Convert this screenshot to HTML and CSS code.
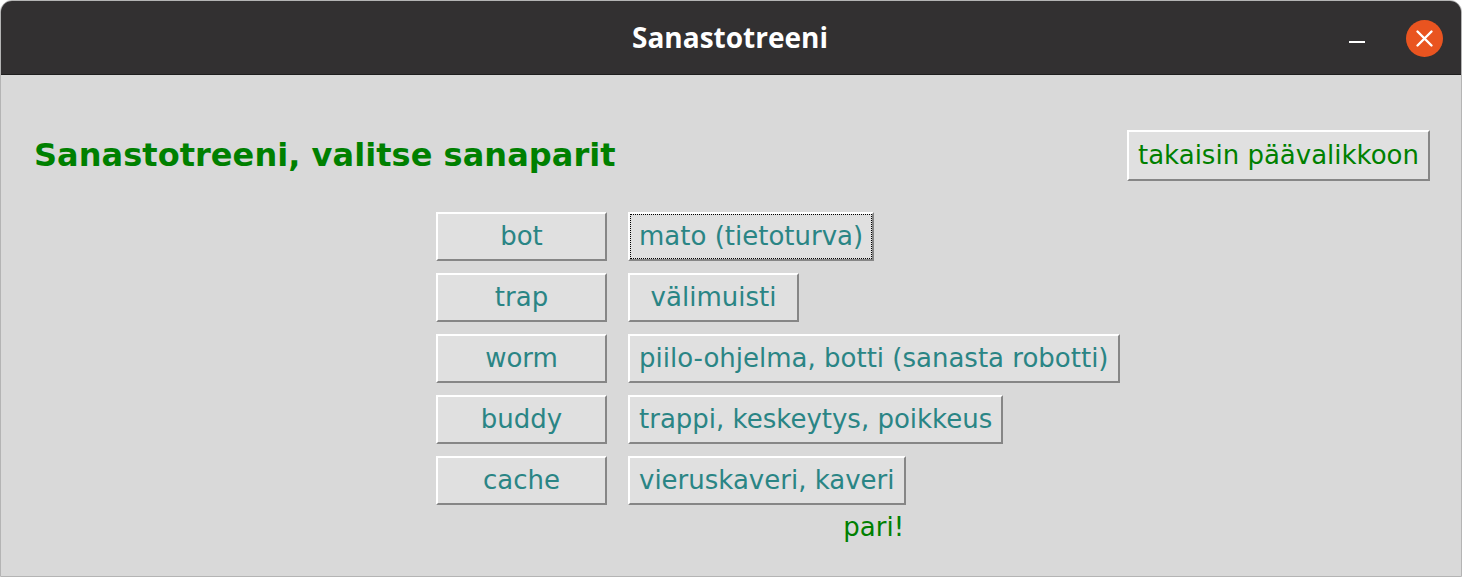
FILE: index.html
```html
<!DOCTYPE html>
<html lang="fi">
<head>
<meta charset="utf-8">
<title>Sanastotreeni</title>
<link rel="stylesheet" href="styles.css">
</head>
<body>
<div class="window">
  <div class="titlebar">
    <div class="title">Sanastotreeni</div>
    <div class="controls">
      <span class="minimize"></span>
      <span class="close">
        <svg width="37" height="37" viewBox="0 0 37 37">
          <circle cx="18.5" cy="18.5" r="18.5" fill="#e95420"/>
          <path d="M11.5 11.5 L25.5 25.5 M25.5 11.5 L11.5 25.5" stroke="#ffffff" stroke-width="2.4" stroke-linecap="round"/>
        </svg>
      </span>
    </div>
  </div>
  <div class="content">
    <div class="header">
      <h1 class="heading">Sanastotreeni, valitse sanaparit</h1>
      <button class="tkbtn back">takaisin päävalikkoon</button>
    </div>
    <div class="pairs">
      <button class="tkbtn word">bot</button>
      <button class="tkbtn meaning focused">mato (tietoturva)</button>
      <button class="tkbtn word">trap</button>
      <button class="tkbtn meaning">välimuisti</button>
      <button class="tkbtn word">worm</button>
      <button class="tkbtn meaning">piilo-ohjelma, botti (sanasta robotti)</button>
      <button class="tkbtn word">buddy</button>
      <button class="tkbtn meaning">trappi, keskeytys, poikkeus</button>
      <button class="tkbtn word">cache</button>
      <button class="tkbtn meaning">vieruskaveri, kaveri</button>
      <div class="result">pari!</div>
    </div>
  </div>
</div>
</body>
</html>
```
FILE: styles.css
```css
* { box-sizing: border-box; }
html, body {
  margin: 0;
  padding: 0;
  background: #ffffff;
}
.window {
  width: 1462px;
  height: 577px;
  border: 1px solid #b4b4b4;
  border-radius: 12px 12px 0 0;
  overflow: hidden;
  display: flex;
  flex-direction: column;
  background: #d9d9d9;
}
.titlebar {
  height: 74px;
  flex: none;
  background: #323031;
  border-bottom: 1px solid #1e1e1e;
  position: relative;
  display: flex;
  align-items: center;
  justify-content: center;
}
.title {
  font-family: "Open Sans", "DejaVu Sans", sans-serif;
  font-weight: 700;
  font-size: 28px;
  color: #ffffff;
  margin-top: -2px;
  margin-left: -2px;
}
.controls {
  position: absolute;
  right: 18px;
  top: 19px;
  display: flex;
  align-items: center;
  gap: 41px;
}
.minimize {
  display: block;
  width: 16px;
  height: 2px;
  background: #ffffff;
  margin-top: 6px;
}
.close {
  display: block;
  width: 37px;
  height: 37px;
}
.close svg { display: block; }
.content {
  flex: 1;
  background: #d9d9d9;
  padding-top: 55px;
  font-family: "DejaVu Sans", sans-serif;
}
.header {
  display: flex;
  justify-content: space-between;
  align-items: center;
  padding: 0 31px 0 33px;
}
.heading {
  margin: 0;
  font-family: "DejaVu Sans", sans-serif;
  font-weight: 700;
  font-size: 32px;
  letter-spacing: 0.05px;
  color: #008000;
  line-height: 37px;
}
.tkbtn {
  font-family: "DejaVu Sans", sans-serif;
  font-size: 26px;
  line-height: 31px;
  padding: 7px 8px;
  background: #e0e0e0;
  border: 2px solid;
  border-color: #ffffff #868686 #868686 #ffffff;
  border-radius: 0;
  color: #2a8585;
  white-space: nowrap;
  text-align: center;
  margin: 0;
  cursor: default;
}
.back {
  color: #008000;
  padding: 8px 9px;
}
.pairs {
  margin-top: 31px;
  margin-left: 435px;
  display: grid;
  grid-template-columns: 171px auto;
  column-gap: 21px;
  row-gap: 12px;
  justify-content: start;
}
.word {
  width: 171px;
}
.meaning {
  justify-self: start;
  min-width: 171px;
  padding: 7px 9px;
}
.focused {
  outline: 1px dotted #000000;
  outline-offset: -3px;
}
.result {
  grid-column: 2;
  justify-self: center;
  margin-top: -5px;
  font-size: 26px;
  line-height: 31px;
  color: #008000;
}
```
